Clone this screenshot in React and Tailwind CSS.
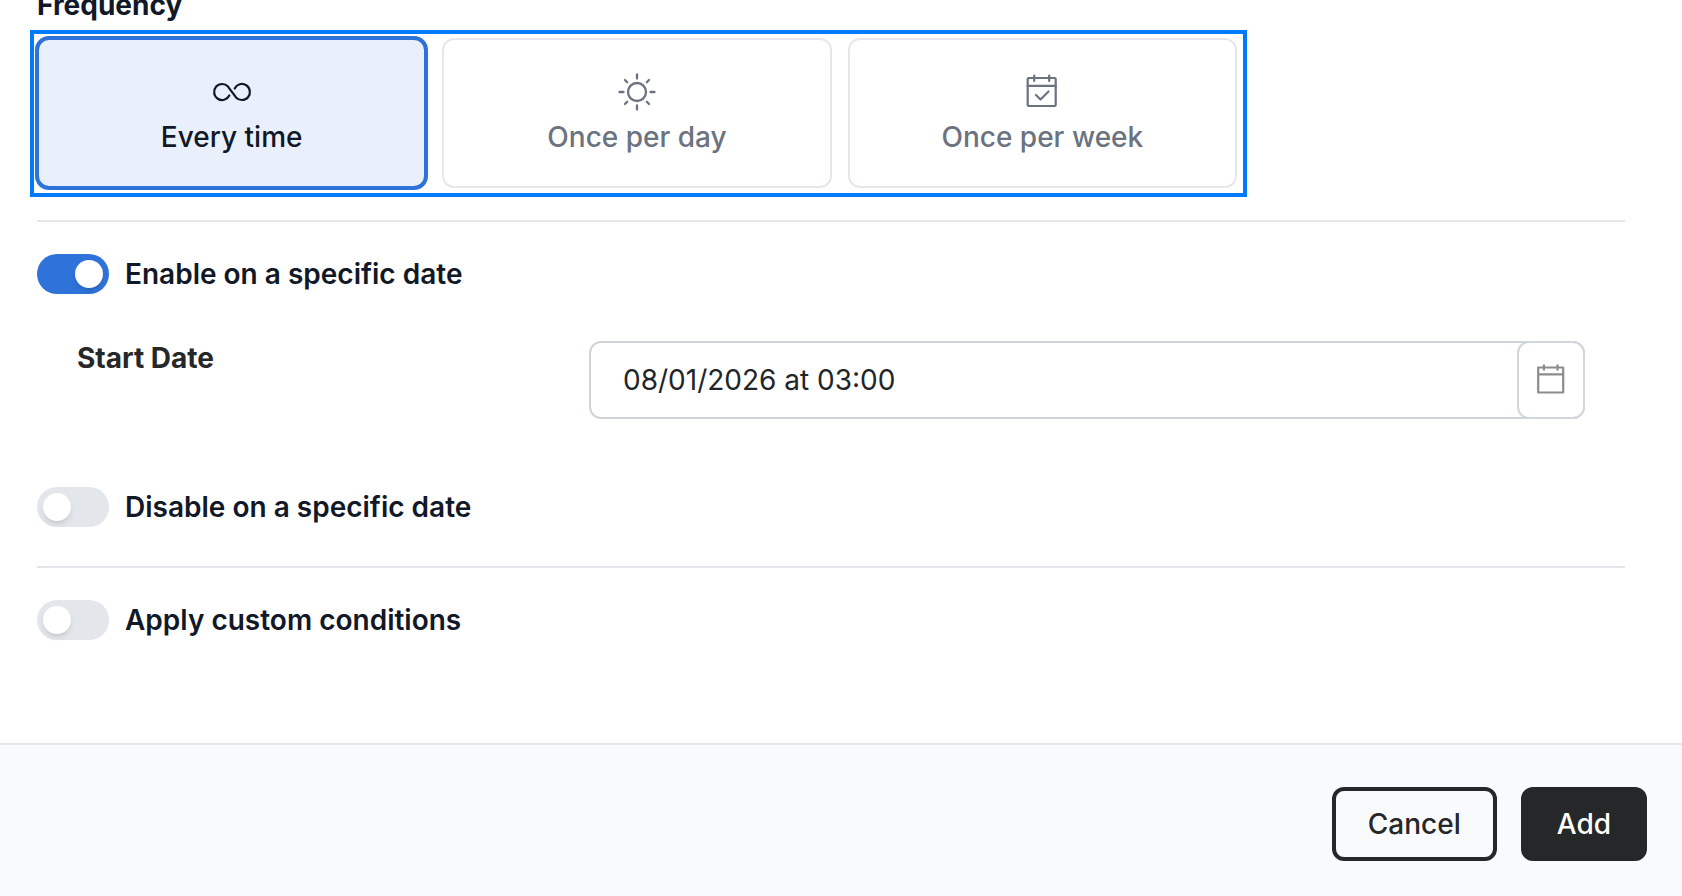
import React, { useState } from 'react';

const InfinityIcon = () => (
  <svg viewBox="0 0 40 40" className="size-10" fill="none" stroke="currentColor" strokeWidth="2.2" strokeLinecap="round" strokeLinejoin="round" aria-hidden="true">
    <path d="M17.3 23.5 A8 8 0 1 1 16 14.6 L24 25.4 A8 8 0 1 0 22.7 16.5" />
  </svg>
);

const SunIcon = () => (
  <svg viewBox="0 0 40 40" className="size-10" fill="none" stroke="currentColor" strokeWidth="2.3" strokeLinecap="round" aria-hidden="true">
    <circle cx="20" cy="20" r="9" />
    <path d="M20 2.5v4M20 33.5v4M2.5 20h4M33.5 20h4M8 8l2.2 2.2M29.8 29.8l2.2 2.2M8 32l2.2-2.2M29.8 10.2l2.2-2.2" />
  </svg>
);

const CalendarCheckIcon = () => (
  <svg viewBox="0 0 40 40" className="size-10" fill="none" stroke="currentColor" strokeWidth="2.2" strokeLinecap="round" strokeLinejoin="round" aria-hidden="true">
    <rect x="5.7" y="6" width="28" height="28" rx="1" />
    <path d="M5.7 13.8h28M12.2 3.5v5.5M27.2 3.5v5.5M14 23l4.5 4.5 8-8" />
  </svg>
);

const CalendarIcon = () => (
  <svg viewBox="0 0 36 36" className="size-9" fill="none" stroke="currentColor" strokeWidth="2.2" strokeLinejoin="round" aria-hidden="true">
    <rect x="5.2" y="5.5" width="25" height="25" />
    <path d="M5.2 12.4h25M10.9 2.5v6M24.5 2.5v6" />
  </svg>
);

const frequencies = [
  { id: 'every', label: 'Every time', Icon: InfinityIcon },
  { id: 'day', label: 'Once per day', Icon: SunIcon },
  { id: 'week', label: 'Once per week', Icon: CalendarCheckIcon },
];

const Toggle = ({ id, label, checked, onChange }) => (
  <label htmlFor={id} className="flex w-fit cursor-pointer items-center gap-4 text-[28px] leading-10 font-semibold">
    <input id={id} type="checkbox" className="peer sr-only" checked={checked} onChange={(e) => onChange(e.target.checked)} />
    <span className="flex h-10 w-18 items-center rounded-full bg-[#e3e7eb] px-[6px] peer-checked:justify-end peer-checked:bg-[#2f73da]">
      <span className="size-7 rounded-full bg-white shadow-md" />
    </span>
    {label}
  </label>
);

const App = () => {
  const [frequency, setFrequency] = useState('every');
  const [enableOn, setEnableOn] = useState(true);
  const [disableOn, setDisableOn] = useState(false);
  const [custom, setCustom] = useState(false);
  const [startDate, setStartDate] = useState('08/01/2026 at 03:00');

  return (
    <div className="flex min-h-screen flex-col overflow-hidden bg-white font-['Inter',sans-serif] text-[#111827]">
      <main className="pr-[57px] pl-[37px]">
        <h2 id="frequency" className="-mt-[13px] text-[28px] leading-9 font-bold">Frequency</h2>

        <div
          role="radiogroup"
          aria-labelledby="frequency"
          className="mt-[7px] -ml-[7px] grid max-w-[1217px] grid-cols-3 gap-4 border-4 border-[#007bff] pt-1 pr-[6px] pb-[5px] pl-[3px]"
        >
          {frequencies.map(({ id, label, Icon }) => (
            <label
              key={id}
              className="flex cursor-pointer flex-col items-center gap-1 rounded-xl border-2 border-gray-200 pt-8 pb-7 text-[28px] leading-[42px] font-medium text-[#6b7280] has-checked:border-[#2f73da] has-checked:bg-[#e9f0fb] has-checked:text-[#111827] has-checked:ring-2 has-checked:ring-[#2f73da]"
            >
              <input
                type="radio"
                name="frequency"
                className="sr-only"
                checked={frequency === id}
                onChange={() => setFrequency(id)}
              />
              <Icon />
              {label}
            </label>
          ))}
        </div>

        <section className="mt-[23px] border-t-2 border-[#e3e7eb] pt-8 pb-[39px]">
          <Toggle id="enable-on" label="Enable on a specific date" checked={enableOn} onChange={setEnableOn} />

          <div className="mt-[47px] mb-[68px] flex items-start px-10">
            <label htmlFor="start-date" className="w-128 shrink-0 text-[28px] leading-[34px] font-bold text-[#262729]">Start Date</label>
            <div className="flex h-[78px] flex-1 rounded-xl border-2 border-[#ced4da]">
              <input
                id="start-date"
                type="text"
                className="min-w-0 flex-1 rounded-xl px-8 text-[28px] text-[#212529] outline-none"
                value={startDate}
                onChange={(e) => setStartDate(e.target.value)}
              />
              <button
                type="button"
                aria-label="Open calendar"
                className="-m-[2px] flex w-[68px] items-center justify-center rounded-xl border-2 border-gray-300 bg-white text-[#8c8c8c]"
              >
                <CalendarIcon />
              </button>
            </div>
          </div>

          <Toggle id="disable-on" label="Disable on a specific date" checked={disableOn} onChange={setDisableOn} />
        </section>

        <section className="border-t-2 border-[#e3e7eb] pt-8 pb-[103px]">
          <Toggle id="custom" label="Apply custom conditions" checked={custom} onChange={setCustom} />
        </section>
      </main>

      <footer className="flex flex-1 items-start justify-end gap-6 border-t-2 border-gray-200 bg-gray-50 px-[35px] pt-[42px] pb-[35px] text-[28px] leading-[42px] font-medium">
        <button type="button" className="rounded-xl border-4 border-[#262729] px-8 py-3 text-[#262729]">Cancel</button>
        <button type="button" className="rounded-xl border-4 border-[#262729] bg-[#262729] px-8 py-3 text-white">Add</button>
      </footer>
    </div>
  );
};

export default App;
